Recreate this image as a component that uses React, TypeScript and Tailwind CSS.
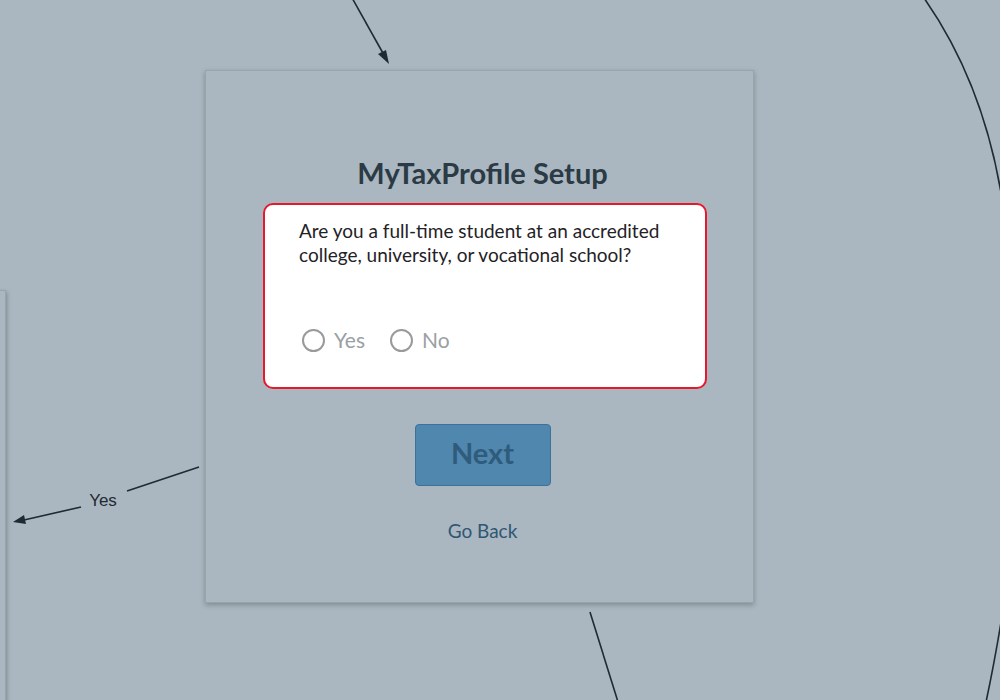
import React from 'react';

const font = { fontFamily: 'Lato, "Open Sans", sans-serif' };

// edges of the flow diagram that sit behind the nodes
const Edges = () => (
  <svg className="absolute inset-0" width="1000" height="700" viewBox="0 0 1000 700">
    <g stroke="#1f2a33" strokeWidth="1.6" fill="none">
      <line x1="351" y1="-4" x2="384" y2="55" />
      <line x1="199" y1="467" x2="127" y2="491" />
      <line x1="81" y1="507" x2="24" y2="520" />
      <path d="M924 -2 Q 985 85 1003 205" />
      <path d="M1003 610 Q 995 660 986 702" />
      <line x1="590" y1="612" x2="618" y2="702" />
    </g>
    <g fill="#1f2a33">
      <polygon points="389,64 378,54 386,50" />
      <polygon points="13,522 24,515 26,524" />
    </g>
    <text x="103" y="506" textAnchor="middle" fontSize="17" fill="#1f2a33" style={{ fontFamily: '"Liberation Sans", Arial, sans-serif' }}>
      Yes
    </text>
  </svg>
);

const Radio = ({ label }: { label: string }) => (
  <label className="flex items-center gap-[9px]">
    <span className="w-[23px] h-[23px] rounded-full border-2 border-[#9a9a9a] bg-white" />
    <span className="text-[21px] leading-6 text-[#9aa0a4]">{label}</span>
  </label>
);

const App = () => {
  return (
    <div className="relative w-[1000px] h-[700px] overflow-hidden bg-[#aab7c0]" style={font}>
      <Edges />

      {/* node cut off at the left edge */}
      <div className="absolute left-[-300px] top-[290px] w-[306px] h-[440px] border border-[#98a4ad] shadow-[1px_2px_4px_rgba(0,0,0,0.25)]" />

      <div className="absolute left-[205px] top-[70px] w-[549px] h-[533px] border border-[#98a4ad] bg-[#aab7c0] shadow-[0_2px_5px_rgba(0,0,0,0.25)]">
        <div className="flex flex-col items-center pt-[85px] pl-[6px]">
          <h1 className="text-[29px] leading-[34px] font-bold text-[#2b3a45]">MyTaxProfile Setup</h1>

          <div className="mt-[13px] ml-[5px] w-[444px] h-[186px] bg-white border-2 border-[#e8182b] rounded-[10px] pl-[34px] pt-[14px]">
            <p className="text-[19px] leading-6 text-[#1f2226]">
              Are you a full-time student at an accredited
              <br />
              college, university, or vocational school?
            </p>
            <div className="flex items-center gap-[25px] mt-[61px] ml-[3px]">
              <Radio label="Yes" />
              <Radio label="No" />
            </div>
          </div>

          <button className="mt-[35px] w-[136px] h-[62px] pb-[5px] rounded-[4px] bg-[#4f87ae] border border-[#3e7198] text-[29px] font-bold text-[#2f5b7c]">
            Next
          </button>

          <a className="mt-[33px] text-[19px] leading-6 text-[#2f5674]">Go Back</a>
        </div>
      </div>
    </div>
  );
};

export default App;
